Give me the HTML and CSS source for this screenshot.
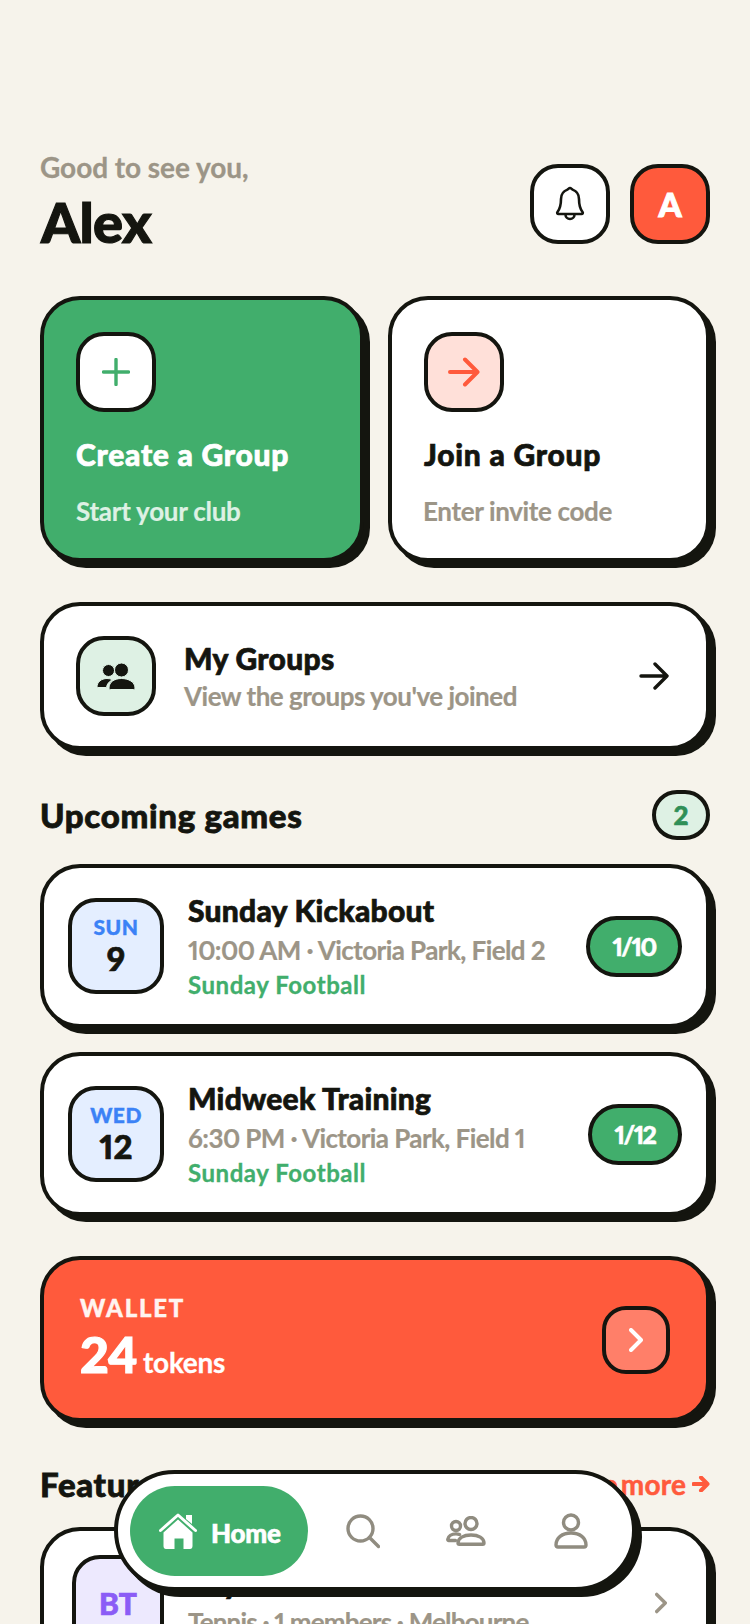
FILE: index.html

```html
<!DOCTYPE html>
<html lang="en">
<head>
  <meta charset="UTF-8">
  <title>Home</title>
  <link rel="stylesheet" href="styles.css">
</head>
<body>
  <div class="app">

    <!-- header -->
    <div class="header">
      <div>
        <div class="hello">Good to see you,</div>
        <div class="name">Alex</div>
      </div>
      <div class="header-btns">
        <div class="square">
          <svg class="bell" viewBox="0 0 30 36"><path d="M15 2c-1 0-1.6 1-2.6 1.6C8.600 5 6 8.500 6 13c0 5-.5 9-3.500 13-.7 1-.2 2 1 2h23c1.200 0 1.700-1 1-2-3-4-3.500-8-3.500-13 0-4.500-2.600-8-6.400-9.400C16.600 3 16 2 15 2Z"/><path d="M10.500 28.500a4.500 4.500 0 0 0 9 0"/></svg>
        </div>
        <div class="square coral">A</div>
      </div>
    </div>

    <!-- create / join -->
    <div class="action-grid">
      <div class="card action green">
        <div class="square">
          <svg class="ico-plus" viewBox="0 0 28 28"><path d="M14 1.500v25M1.500 14h25"/></svg>
        </div>
        <div class="action-title">Create a Group</div>
        <div class="action-sub">Start your club</div>
      </div>
      <div class="card action">
        <div class="square blush">
          <svg class="ico-arrow" viewBox="0 0 32 30"><path d="M2 15h27M17 2.500 29.500 15 17 27.500"/></svg>
        </div>
        <div class="action-title">Join a Group</div>
        <div class="action-sub grey">Enter invite code</div>
      </div>
    </div>

    <!-- my groups -->
    <div class="card groups-row">
      <div class="square mint">
        <svg class="ico-people" viewBox="0 0 38 27"><circle cx="11.500" cy="7.500" r="6"/><circle cx="24.500" cy="7" r="7"/><path d="M0 24c0-5 4.500-8.500 10-8.500 2 0 3.800.4 5.300 1.200C12.300 18.500 9.800 21 9.500 24.500H1c-.6 0-1-.2-1-.5Z"/><path d="M12 25c0-6 5.500-9.500 12.500-9.500S38 19 38 25c0 1-.7 1.500-1.500 1.500h-23C12.700 26.500 12 26 12 25Z"/></svg>
      </div>
      <div class="row-text">
        <div class="row-title">My Groups</div>
        <div class="row-sub">View the groups you've joined</div>
      </div>
      <svg class="ico-go" viewBox="0 0 30 28"><path d="M2 14h25M16 2l12 12-12 12"/></svg>
    </div>

    <!-- upcoming -->
    <div class="section-head">
      <div class="section-title">Upcoming games</div>
      <div class="count">2</div>
    </div>

    <div class="card game">
      <div class="date-box">
        <div class="date-day">SUN</div>
        <div class="date-num">9</div>
      </div>
      <div class="game-info">
        <div class="game-title">Sunday Kickabout</div>
        <div class="game-meta">10:00 AM · Victoria Park, Field 2</div>
        <div class="game-group">Sunday Football</div>
      </div>
      <div class="slots">1/10</div>
    </div>

    <div class="card game">
      <div class="date-box">
        <div class="date-day">WED</div>
        <div class="date-num">12</div>
      </div>
      <div class="game-info">
        <div class="game-title">Midweek Training</div>
        <div class="game-meta">6:30 PM · Victoria Park, Field 1</div>
        <div class="game-group">Sunday Football</div>
      </div>
      <div class="slots slots-small">1/12</div>
    </div>

    <!-- wallet -->
    <div class="card wallet">
      <div class="wallet-text">
        <div class="wallet-label">WALLET</div>
        <div class="wallet-amount"><span class="wallet-num">24</span> tokens</div>
      </div>
      <div class="wallet-btn">
        <svg class="ico-chev" viewBox="0 0 14 24"><path d="M2 2l10 10L2 22"/></svg>
      </div>
    </div>

    <!-- featured -->
    <div class="section-head featured-head">
      <div class="section-title">Featured groups</div>
      <div class="see-more">See more
        <svg class="ico-more" viewBox="0 0 18 16"><path d="M1.500 8h14M9 1.500 15.500 8 9 14.500"/></svg>
      </div>
    </div>

    <div class="card game featured">
      <div class="date-box purple">BT</div>
      <div class="game-info">
        <div class="game-title">Bayside Tennis</div>
        <div class="game-meta">Tennis · 1 members · Melbourne</div>
      </div>
      <svg class="ico-next" viewBox="0 0 14 24"><path d="M2 2l10 10L2 22"/></svg>
    </div>

    <!-- bottom nav -->
    <div class="nav">
      <div class="nav-item active">
        <svg class="ico-home" viewBox="0 0 38 36"><path class="roof" d="M1.500 17.500 19 2l17.500 15.500"/><path class="chimney" d="M27 2h6v9l-6-5Z"/><path class="body" d="M4.500 19.500 19 6.500l14.500 13V33c0 1.700-1 3-2.500 3h-6.500V25.500h-9V36H7c-1.500 0-2.500-1.300-2.500-3Z"/></svg>
        <span>Home</span>
      </div>
      <div class="nav-item">
        <svg class="ico-nav" viewBox="0 0 34 34"><circle cx="14.500" cy="14.500" r="12.500"/><path d="M23.500 23.500 32.500 32.500"/></svg>
      </div>
      <div class="nav-item">
        <svg class="ico-nav ico-nav-wide" viewBox="0 0 40 30"><circle cx="10" cy="10" r="4.500"/><circle cx="25" cy="7.500" r="6"/><path d="M13.500 18.500c-1-.4-2-.6-3.500-.6-4.500 0-7.700 2.200-8.200 5.400-.1.700.3 1.200 1 1.200h6.700"/><path d="M12 27c0-5 5.500-8 13-8s13 3 13 8c0 .8-.5 1.300-1.300 1.300H13.300C12.500 28.300 12 27.800 12 27Z"/></svg>
      </div>
      <div class="nav-item">
        <svg class="ico-nav ico-nav-person" viewBox="0 0 34 36"><circle cx="17" cy="9.500" r="7.500"/><path d="M2 32c0-7 6-12 15-12s15 5 15 12c0 1.300-.7 2-2 2H4c-1.300 0-2-.7-2-2Z"/></svg>
      </div>
    </div>

  </div>
</body>
</html>
```

FILE: styles.css

```css
* { box-sizing: border-box; }
html, body { margin: 0; padding: 0; }
body { font-family: "Lato", "Noto Sans", sans-serif; color: #14150f; background: #f6f3eb; font-variant-numeric: proportional-nums; }
svg { display: block; fill: none; }

.app { position: relative; height: 1624px; overflow: hidden; padding: 164px 40px 0; background: #f6f3eb; }

/* shared boxes */
.card { border: 4px solid #14150f; border-radius: 40px; background: #fff; box-shadow: 6px 6px 0 #14150f; }
.square { width: 80px; height: 80px; flex: none; display: flex; align-items: center; justify-content: center; border: 4px solid #14150f; border-radius: 28px; background: #fff; }
.coral { background: #ff5a3c; color: #fff; font-size: 33px; font-weight: 900; -webkit-text-stroke: 1px #fff; }
.blush { background: #ffe0d9; }
.mint { background: #def1e4; }

/* header */
.header { display: flex; justify-content: space-between; height: 80px; margin-bottom: 52px; }
.hello { margin-top: -13px; font-size: 28px; line-height: 32px; font-weight: 700; color: #9c9587; letter-spacing: -0.05px; -webkit-text-stroke: 0.3px #9c9587; }
.name { margin-top: 6px; margin-left: 1px; font-size: 56px; line-height: 66px; font-weight: 900; letter-spacing: -0.7px; -webkit-text-stroke: 1.2px #14150f; }
.header-btns { display: flex; gap: 20px; }
.bell { width: 30px; height: 36px; stroke: #14150f; stroke-width: 2.6; stroke-linejoin: round; }

/* create / join */
.action-grid { display: grid; grid-template-columns: 324px 322px; gap: 24px; margin-bottom: 40px; }
.action { height: 266px; padding: 32px; }
.action.green { background: #41ae6c; color: #fff; }
.action-title { margin-top: 25px; font-size: 30px; line-height: 34px; font-weight: 900; letter-spacing: 0.75px; -webkit-text-stroke: 0.7px currentColor; }
.action-sub { margin-top: 24px; font-size: 26px; line-height: 32px; font-weight: 700; color: #def1e4; letter-spacing: -0.25px; -webkit-text-stroke: 0.2px currentColor; }
.action-sub.grey { margin-left: -1px; color: #9c9587; letter-spacing: -0.35px; }
.ico-plus { width: 28px; height: 28px; stroke: #41ae6c; stroke-width: 3.4; stroke-linecap: round; }
.ico-arrow { width: 32px; height: 30px; stroke: #ff5a3c; stroke-width: 4; stroke-linecap: round; stroke-linejoin: round; }

/* my groups */
.groups-row { display: flex; align-items: center; height: 148px; padding: 0 32px; margin-bottom: 40px; }
.row-text { flex: 1; margin-left: 28px; }
.row-title { font-size: 30px; line-height: 36px; font-weight: 900; letter-spacing: 0.3px; -webkit-text-stroke: 0.7px #14150f; }
.row-sub { margin-top: 4px; font-size: 26px; line-height: 32px; font-weight: 700; color: #9c9587; letter-spacing: -0.5px; -webkit-text-stroke: 0.2px #9c9587; }
.ico-people { width: 38px; height: 27px; fill: #14150f; }
.ico-people circle, .ico-people path { stroke: #def1e4; stroke-width: 1; }
.ico-go { width: 30px; height: 28px; margin-right: 5px; stroke: #14150f; stroke-width: 3.4; stroke-linecap: round; stroke-linejoin: round; }

/* section headings */
.section-head { display: flex; justify-content: space-between; align-items: center; height: 50px; margin-bottom: 24px; }
.section-title { font-size: 33px; line-height: 38px; font-weight: 900; letter-spacing: 0.7px; -webkit-text-stroke: 0.8px #14150f; }
.count { width: 58px; height: 50px; display: flex; align-items: center; justify-content: center; border: 4px solid #14150f; border-radius: 25px; background: #def1e4; color: #2f8f57; font-size: 26px; font-weight: 900; -webkit-text-stroke: 0.6px #2f8f57; }

/* game rows */
.game { display: flex; align-items: center; height: 164px; padding: 0 24px; margin-bottom: 24px; }
.date-box { width: 96px; height: 96px; flex: none; display: flex; flex-direction: column; align-items: center; justify-content: center; border: 4px solid #14150f; border-radius: 28px; background: #e4eeff; }
.date-day { font-size: 21px; line-height: 24px; font-weight: 900; color: #3b82f6; letter-spacing: 0.5px; -webkit-text-stroke: 0.4px #3b82f6; }
.date-num { font-size: 33px; line-height: 38px; font-weight: 900; -webkit-text-stroke: 0.7px #14150f; }
.game-info { flex: 1; margin-left: 24px; }
.game-title { font-size: 30px; line-height: 36px; font-weight: 900; letter-spacing: 0.25px; -webkit-text-stroke: 0.7px #14150f; }
.game-meta { margin-top: 4px; font-size: 26px; line-height: 36px; font-weight: 700; color: #9c9587; letter-spacing: -0.58px; -webkit-text-stroke: 0.2px #9c9587; }
.game-group { margin-top: 1px; font-size: 24px; line-height: 32px; font-weight: 700; color: #41ae6c; letter-spacing: 0.55px; -webkit-text-stroke: 0.3px #41ae6c; }
.slots { flex: none; width: 96px; height: 61px; display: flex; align-items: center; justify-content: center; border: 4px solid #14150f; border-radius: 31px; background: #41ae6c; color: #fff; font-size: 25px; font-weight: 900; letter-spacing: -1.6px; -webkit-text-stroke: 0.5px #fff; }
.slots-small { width: 94px; }

/* wallet */
.wallet { display: flex; justify-content: space-between; align-items: center; height: 166px; margin-top: 40px; padding: 0 36px; background: #ff5a3c; color: #fff; }
.wallet-text { margin-top: 7px; }
.wallet-label { font-size: 24px; line-height: 28px; font-weight: 900; letter-spacing: 1.8px; color: #fff4f0; -webkit-text-stroke: 0.4px #fff4f0; }
.wallet-amount { margin-top: 3px; font-size: 28px; line-height: 58px; font-weight: 700; letter-spacing: -0.3px; -webkit-text-stroke: 0.3px #fff; }
.wallet-num { font-size: 50px; font-weight: 900; letter-spacing: -1px; -webkit-text-stroke: 1.2px #fff; }
.wallet-btn { width: 68px; height: 68px; margin-top: 2px; display: flex; align-items: center; justify-content: center; border: 4px solid #14150f; border-radius: 24px; background: #ff7f69; }
.ico-chev { width: 14px; height: 24px; stroke: #fff; stroke-width: 4; stroke-linecap: round; stroke-linejoin: round; }

/* featured */
.featured-head { margin-top: 37px; margin-bottom: 18px; }
.see-more { display: flex; align-items: center; gap: 6px; font-size: 28px; font-weight: 700; color: #ff5a3c; letter-spacing: 0.15px; word-spacing: -4px; -webkit-text-stroke: 0.5px #ff5a3c; }
.ico-more { width: 18px; height: 16px; stroke: #ff5a3c; stroke-width: 4; stroke-linecap: round; stroke-linejoin: round; }
.featured { height: 190px; padding: 0 28px; align-items: flex-start; padding-top: 24px; }
.date-box.purple { background: #ede9fe; color: #8b5cf6; font-size: 30px; font-weight: 900; width: 92px; height: 96px; -webkit-text-stroke: 0.7px #8b5cf6; }
.featured .game-info { margin-top: 9px; }
.featured .game-meta { letter-spacing: -0.8px; }
.ico-next { width: 12px; height: 22px; margin-top: 37px; margin-right: 11px; stroke: #9c9587; stroke-width: 4; stroke-linecap: round; stroke-linejoin: round; }

/* bottom nav */
.nav { position: absolute; left: 114px; top: 1470px; width: 522px; height: 121px; display: flex; align-items: center; gap: 4px; padding: 0 12px; border: 4px solid #14150f; border-radius: 61px; background: #fff; box-shadow: 6px 6px 0 #14150f; }
.nav-item { width: 100px; height: 90px; display: flex; align-items: center; justify-content: center; }
.nav-item.active { width: 178px; gap: 14px; margin-right: 1px; border-radius: 45px; background: #41ae6c; color: #fff; font-size: 26px; font-weight: 900; -webkit-text-stroke: 0.6px #fff; }
.nav-item.active span { margin-top: 4px; letter-spacing: -0.2px; }
.ico-home { width: 38px; height: 36px; margin-left: 2px; }
.ico-home .roof { stroke: #fff; stroke-width: 3; stroke-linecap: round; stroke-linejoin: round; }
.ico-home .chimney, .ico-home .body { fill: #fff; }
.ico-nav { width: 34px; height: 36px; stroke: #908c80; stroke-width: 3.4; stroke-linecap: round; stroke-linejoin: round; }
.ico-nav-wide { width: 40px; height: 30px; }
.ico-nav-person { margin-left: 2px; }
```
